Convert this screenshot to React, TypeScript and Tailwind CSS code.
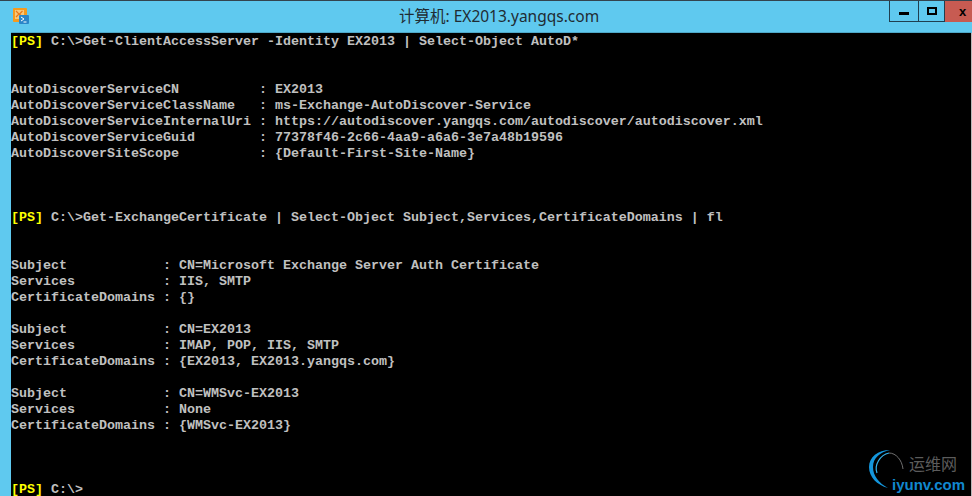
const lines: [string, string][] = [
  ["[PS]", " C:\\>Get-ClientAccessServer -Identity EX2013 | Select-Object AutoD*"],
  ["", ""],
  ["", ""],
  ["", "AutoDiscoverServiceCN          : EX2013"],
  ["", "AutoDiscoverServiceClassName   : ms-Exchange-AutoDiscover-Service"],
  ["", "AutoDiscoverServiceInternalUri : https://autodiscover.yangqs.com/autodiscover/autodiscover.xml"],
  ["", "AutoDiscoverServiceGuid        : 77378f46-2c66-4aa9-a6a6-3e7a48b19596"],
  ["", "AutoDiscoverSiteScope          : {Default-First-Site-Name}"],
  ["", ""],
  ["", ""],
  ["", ""],
  ["[PS]", " C:\\>Get-ExchangeCertificate | Select-Object Subject,Services,CertificateDomains | fl"],
  ["", ""],
  ["", ""],
  ["", "Subject            : CN=Microsoft Exchange Server Auth Certificate"],
  ["", "Services           : IIS, SMTP"],
  ["", "CertificateDomains : {}"],
  ["", ""],
  ["", "Subject            : CN=EX2013"],
  ["", "Services           : IMAP, POP, IIS, SMTP"],
  ["", "CertificateDomains : {EX2013, EX2013.yangqs.com}"],
  ["", ""],
  ["", "Subject            : CN=WMSvc-EX2013"],
  ["", "Services           : None"],
  ["", "CertificateDomains : {WMSvc-EX2013}"],
  ["", ""],
  ["", ""],
  ["", ""],
  ["[PS]", " C:\\>"],
];

function AppIcon() {
  return (
    <svg width="16" height="16" viewBox="0 0 16 16" className="shrink-0">
      <rect x="0" y="0" width="14" height="14" rx="1" fill="#f59a1e" />
      <rect x="2" y="2" width="9" height="9" fill="#f8c878" />
      <path d="M3 3l3 3-3 3M9.5 3l-3 3 3 3" fill="none" stroke="#e8781a" strokeWidth="1.2" />
      <rect x="6" y="7" width="10" height="9" rx="1" fill="#2a86c8" />
      <path d="M8 9l3 2-3 2M10.5 14h3" fill="none" stroke="#ffffff" strokeWidth="1" />
    </svg>
  );
}

function Watermark() {
  return (
    <div className="absolute left-[868px] top-[448px] w-[104px] h-[48px]">
      <svg width="48" height="48" viewBox="0 0 48 48" className="absolute left-0 top-0">
        <path d="M22 1C10 1 1 8 1 18C1 28 9 36 20 39C11 34 5 27 5 18C5 9 12 3 22 1Z" fill="#1496dc" />
        <path d="M9 24C6 16 12 6 21 4" fill="none" stroke="#35b4ee" strokeWidth="1.2" />
        <path d="M21 4C28 4 34 11 35 20" fill="none" stroke="#8a8a8a" strokeWidth="0.8" />
      </svg>
      <div className="absolute left-[41px] top-[4px] text-[16px] leading-[20px] text-[#5c5c5c] font-['Noto_Sans_CJK_SC',sans-serif]">
        运维网
      </div>
      <div className="absolute left-[24px] top-[27px] text-[15px] leading-[17px] font-bold text-[#1187cf] font-['Liberation_Sans',sans-serif]">
        iyunv.com
      </div>
    </div>
  );
}

export default function App() {
  return (
    <div className="relative w-[972px] h-[496px] overflow-hidden bg-[#5fc9ef] flex flex-col border-t border-[#33444f]">
      <div className="h-[31px] shrink-0 flex items-start">
        <div className="pl-[13px] pt-[7px]">
          <AppIcon />
        </div>
        <div className="flex-1 pl-[370px] pt-[5px] text-[15.5px] leading-[20px] text-[#1f2c33] font-['Noto_Sans','Noto_Sans_CJK_SC',sans-serif]">
          计算机: EX2013.yangqs.com
        </div>
        <div className="flex h-[21px] shrink-0">
          <div className="w-[29px] border-l border-b border-[#1f3f50] flex items-center justify-center pt-[4px]">
            <div className="w-[10px] h-[3px] bg-black" />
          </div>
          <div className="w-[26px] border-l border-b border-[#1f3f50] flex items-center justify-center">
            <div className="w-[10px] h-[8px] border-2 border-black" />
          </div>
          <div className="w-[28px] border-l border-[#1f3f50] bg-[#c75b52] flex items-center justify-center pl-[8px] text-[13px] font-bold leading-none text-black font-['Liberation_Sans',sans-serif]">
            x
          </div>
        </div>
      </div>
      <div className="flex-1 ml-[11px] mr-[1px] bg-black border-t border-[#4fa8c8] overflow-hidden">
        <div className="pt-[1px] font-['Liberation_Mono',monospace] text-[13.33px] leading-[16px] font-bold text-[#c0c0c0] whitespace-pre">
          {lines.map(([prompt, text], i) => (
            <div key={i} className="h-[16px]">
              <span className="text-[#ffff00]">{prompt}</span>
              {text}
            </div>
          ))}
        </div>
      </div>
      <div className="absolute right-0 top-[32px] bottom-0 w-[1px] bg-[#b8b8b8]" />
      <Watermark />
    </div>
  );
}
